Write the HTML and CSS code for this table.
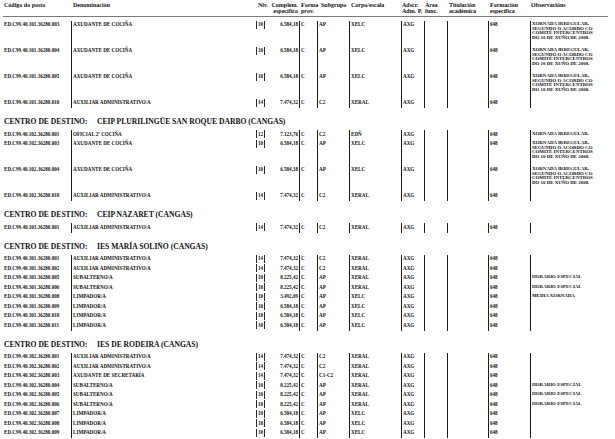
FILE: index.html
```html
<!DOCTYPE html>
<html lang="gl">
<head>
<meta charset="utf-8">
<title>Relación de postos</title>
<link rel="stylesheet" href="styles.css">
</head>
<body>
<div class="page">
  <div class="grid head">
    <div class="hc"><div></div><div>Código do posto</div></div>
    <div class="hc pl"><div></div><div>Denominación</div></div>
    <div class="hc niv-h"><div></div><div>Niv.</div></div>
    <div class="hc comp-h"><div>Complem.</div><div>específico</div></div>
    <div class="hc pl"><div>Forma</div><div>prov.</div></div>
    <div class="hc sub-h"><div></div><div>Subgrupo</div></div>
    <div class="hc pl"><div></div><div>Corpo/escala</div></div>
    <div class="hc"><div>Adscr.</div><div>Adm. P.</div></div>
    <div class="hc"><div>Área</div><div>func.</div></div>
    <div class="hc pl"><div>Titulación</div><div>académica</div></div>
    <div class="hc pl"><div>Formación</div><div>específica</div></div>
    <div class="hc"><div></div><div>Observacións</div></div>
  </div>

  <div class="grid row m"><div class="c">ED.C99.40.101.36280.003</div><div class="c bl">AXUDANTE DE COCIÑA</div><div class="c niv"><span>10</span></div><div class="c comp">6.584,18</div><div class="c bl">C</div><div class="c bl">AP</div><div class="c bl">XELC</div><div class="c bl">AXG</div><div class="c bl"></div><div class="c bl"></div><div class="c bl">648</div><div class="c bl obs">XORNADA IRREGULAR,<br>SEGUNDO O ACORDO CO<br>COMITÉ INTERCENTROS<br>DO 10 DE XUÑO DE 2008.</div></div>
  <div class="grid row m"><div class="c">ED.C99.40.101.36280.004</div><div class="c bl">AXUDANTE DE COCIÑA</div><div class="c niv"><span>10</span></div><div class="c comp">6.584,18</div><div class="c bl">C</div><div class="c bl">AP</div><div class="c bl">XELC</div><div class="c bl">AXG</div><div class="c bl"></div><div class="c bl"></div><div class="c bl">648</div><div class="c bl obs">XORNADA IRREGULAR,<br>SEGUNDO O ACORDO CO<br>COMITÉ INTERCENTROS<br>DO 10 DE XUÑO DE 2008.</div></div>
  <div class="grid row m"><div class="c">ED.C99.40.101.36280.005</div><div class="c bl">AXUDANTE DE COCIÑA</div><div class="c niv"><span>10</span></div><div class="c comp">6.584,18</div><div class="c bl">C</div><div class="c bl">AP</div><div class="c bl">XELC</div><div class="c bl">AXG</div><div class="c bl"></div><div class="c bl"></div><div class="c bl">648</div><div class="c bl obs">XORNADA IRREGULAR,<br>SEGUNDO O ACORDO CO<br>COMITÉ INTERCENTROS<br>DO 10 DE XUÑO DE 2008.</div></div>
  <div class="grid row s"><div class="c">ED.C99.40.101.36280.010</div><div class="c bl">AUXILIAR ADMINISTRATIVO/A</div><div class="c niv"><span>14</span></div><div class="c comp">7.474,32</div><div class="c bl">C</div><div class="c bl">C2</div><div class="c bl">XERAL</div><div class="c bl">AXG</div><div class="c bl"></div><div class="c bl"></div><div class="c bl">648</div><div class="c bl obs"></div></div>

  <div class="dest"><span class="lab">CENTRO DE DESTINO:</span>CEIP PLURILINGÜE SAN ROQUE DARBO (CANGAS)</div>
  <div class="grid row s"><div class="c">ED.C99.40.102.36280.001</div><div class="c bl">OFICIAL 2ª COCIÑA</div><div class="c niv"><span>12</span></div><div class="c comp">7.123,76</div><div class="c bl">C</div><div class="c bl">C2</div><div class="c bl">EDÑ</div><div class="c bl">AXG</div><div class="c bl"></div><div class="c bl"></div><div class="c bl">648</div><div class="c bl obs">XORNADA IRREGULAR.</div></div>
  <div class="grid row m"><div class="c">ED.C99.40.102.36280.003</div><div class="c bl">AXUDANTE DE COCIÑA</div><div class="c niv"><span>10</span></div><div class="c comp">6.584,18</div><div class="c bl">C</div><div class="c bl">AP</div><div class="c bl">XELC</div><div class="c bl">AXG</div><div class="c bl"></div><div class="c bl"></div><div class="c bl">648</div><div class="c bl obs">XORNADA IRREGULAR,<br>SEGUNDO O ACORDO CO<br>COMITÉ INTERCENTROS<br>DO 10 DE XUÑO DE 2008.</div></div>
  <div class="grid row m"><div class="c">ED.C99.40.102.36280.004</div><div class="c bl">AXUDANTE DE COCIÑA</div><div class="c niv"><span>10</span></div><div class="c comp">6.584,18</div><div class="c bl">C</div><div class="c bl">AP</div><div class="c bl">XELC</div><div class="c bl">AXG</div><div class="c bl"></div><div class="c bl"></div><div class="c bl">648</div><div class="c bl obs">XORNADA IRREGULAR,<br>SEGUNDO O ACORDO CO<br>COMITÉ INTERCENTROS<br>DO 10 DE XUÑO DE 2008.</div></div>
  <div class="grid row s"><div class="c">ED.C99.40.102.36280.010</div><div class="c bl">AUXILIAR ADMINISTRATIVO/A</div><div class="c niv"><span>14</span></div><div class="c comp">7.474,32</div><div class="c bl">C</div><div class="c bl">C2</div><div class="c bl">XERAL</div><div class="c bl">AXG</div><div class="c bl"></div><div class="c bl"></div><div class="c bl">648</div><div class="c bl obs"></div></div>

  <div class="dest"><span class="lab">CENTRO DE DESTINO:</span>CEIP NAZARET (CANGAS)</div>
  <div class="grid row s"><div class="c">ED.C99.40.103.36280.001</div><div class="c bl">AUXILIAR ADMINISTRATIVO/A</div><div class="c niv"><span>14</span></div><div class="c comp">7.474,32</div><div class="c bl">C</div><div class="c bl">C2</div><div class="c bl">XERAL</div><div class="c bl">AXG</div><div class="c bl"></div><div class="c bl"></div><div class="c bl">648</div><div class="c bl obs"></div></div>

  <div class="dest"><span class="lab">CENTRO DE DESTINO:</span>IES MARÍA SOLIÑO (CANGAS)</div>
  <div class="grid row s"><div class="c">ED.C99.40.301.36280.001</div><div class="c bl">AUXILIAR ADMINISTRATIVO/A</div><div class="c niv"><span>14</span></div><div class="c comp">7.474,32</div><div class="c bl">C</div><div class="c bl">C2</div><div class="c bl">XERAL</div><div class="c bl">AXG</div><div class="c bl"></div><div class="c bl"></div><div class="c bl">648</div><div class="c bl obs"></div></div>
  <div class="grid row s"><div class="c">ED.C99.40.301.36280.002</div><div class="c bl">AUXILIAR ADMINISTRATIVO/A</div><div class="c niv"><span>14</span></div><div class="c comp">7.474,32</div><div class="c bl">C</div><div class="c bl">C2</div><div class="c bl">XERAL</div><div class="c bl">AXG</div><div class="c bl"></div><div class="c bl"></div><div class="c bl">648</div><div class="c bl obs"></div></div>
  <div class="grid row s"><div class="c">ED.C99.40.301.36280.005</div><div class="c bl">SUBALTERNO/A</div><div class="c niv"><span>10</span></div><div class="c comp">8.225,42</div><div class="c bl">C</div><div class="c bl">AP</div><div class="c bl">XERAL</div><div class="c bl">AXG</div><div class="c bl"></div><div class="c bl"></div><div class="c bl">648</div><div class="c bl obs">HORARIO ESPECIAL</div></div>
  <div class="grid row s"><div class="c">ED.C99.40.301.36280.006</div><div class="c bl">SUBALTERNO/A</div><div class="c niv"><span>10</span></div><div class="c comp">8.225,42</div><div class="c bl">C</div><div class="c bl">AP</div><div class="c bl">XERAL</div><div class="c bl">AXG</div><div class="c bl"></div><div class="c bl"></div><div class="c bl">648</div><div class="c bl obs">HORARIO ESPECIAL</div></div>
  <div class="grid row s"><div class="c">ED.C99.40.301.36280.008</div><div class="c bl">LIMPADOR/A</div><div class="c niv"><span>10</span></div><div class="c comp">3.492,09</div><div class="c bl">C</div><div class="c bl">AP</div><div class="c bl">XELC</div><div class="c bl">AXG</div><div class="c bl"></div><div class="c bl"></div><div class="c bl">648</div><div class="c bl obs">MEDIA XORNADA</div></div>
  <div class="grid row s"><div class="c">ED.C99.40.301.36280.009</div><div class="c bl">LIMPADOR/A</div><div class="c niv"><span>10</span></div><div class="c comp">6.584,18</div><div class="c bl">C</div><div class="c bl">AP</div><div class="c bl">XELC</div><div class="c bl">AXG</div><div class="c bl"></div><div class="c bl"></div><div class="c bl">648</div><div class="c bl obs"></div></div>
  <div class="grid row s"><div class="c">ED.C99.40.301.36280.010</div><div class="c bl">LIMPADOR/A</div><div class="c niv"><span>10</span></div><div class="c comp">6.584,18</div><div class="c bl">C</div><div class="c bl">AP</div><div class="c bl">XELC</div><div class="c bl">AXG</div><div class="c bl"></div><div class="c bl"></div><div class="c bl">648</div><div class="c bl obs"></div></div>
  <div class="grid row s"><div class="c">ED.C99.40.301.36280.011</div><div class="c bl">LIMPADOR/A</div><div class="c niv"><span>10</span></div><div class="c comp">6.584,18</div><div class="c bl">C</div><div class="c bl">AP</div><div class="c bl">XELC</div><div class="c bl">AXG</div><div class="c bl"></div><div class="c bl"></div><div class="c bl">648</div><div class="c bl obs"></div></div>

  <div class="dest"><span class="lab">CENTRO DE DESTINO:</span>IES DE RODEIRA (CANGAS)</div>
  <div class="grid row s"><div class="c">ED.C99.40.302.36280.001</div><div class="c bl">AUXILIAR ADMINISTRATIVO/A</div><div class="c niv"><span>14</span></div><div class="c comp">7.474,32</div><div class="c bl">C</div><div class="c bl">C2</div><div class="c bl">XERAL</div><div class="c bl">AXG</div><div class="c bl"></div><div class="c bl"></div><div class="c bl">648</div><div class="c bl obs"></div></div>
  <div class="grid row s"><div class="c">ED.C99.40.302.36280.002</div><div class="c bl">AUXILIAR ADMINISTRATIVO/A</div><div class="c niv"><span>14</span></div><div class="c comp">7.474,32</div><div class="c bl">C</div><div class="c bl">C2</div><div class="c bl">XERAL</div><div class="c bl">AXG</div><div class="c bl"></div><div class="c bl"></div><div class="c bl">648</div><div class="c bl obs"></div></div>
  <div class="grid row s"><div class="c">ED.C99.40.302.36280.003</div><div class="c bl">AXUDANTE DE SECRETARÍA</div><div class="c niv"><span>14</span></div><div class="c comp">7.474,32</div><div class="c bl">C</div><div class="c bl">C1-C2</div><div class="c bl">XERAL</div><div class="c bl">AXG</div><div class="c bl"></div><div class="c bl"></div><div class="c bl">648</div><div class="c bl obs"></div></div>
  <div class="grid row s"><div class="c">ED.C99.40.302.36280.004</div><div class="c bl">SUBALTERNO/A</div><div class="c niv"><span>10</span></div><div class="c comp">8.225,42</div><div class="c bl">C</div><div class="c bl">AP</div><div class="c bl">XERAL</div><div class="c bl">AXG</div><div class="c bl"></div><div class="c bl"></div><div class="c bl">648</div><div class="c bl obs">HORARIO ESPECIAL</div></div>
  <div class="grid row s"><div class="c">ED.C99.40.302.36280.005</div><div class="c bl">SUBALTERNO/A</div><div class="c niv"><span>10</span></div><div class="c comp">8.225,42</div><div class="c bl">C</div><div class="c bl">AP</div><div class="c bl">XERAL</div><div class="c bl">AXG</div><div class="c bl"></div><div class="c bl"></div><div class="c bl">648</div><div class="c bl obs">HORARIO ESPECIAL</div></div>
  <div class="grid row s"><div class="c">ED.C99.40.302.36280.006</div><div class="c bl">SUBALTERNO/A</div><div class="c niv"><span>10</span></div><div class="c comp">8.225,42</div><div class="c bl">C</div><div class="c bl">AP</div><div class="c bl">XERAL</div><div class="c bl">AXG</div><div class="c bl"></div><div class="c bl"></div><div class="c bl">648</div><div class="c bl obs">HORARIO ESPECIAL</div></div>
  <div class="grid row s"><div class="c">ED.C99.40.302.36280.007</div><div class="c bl">LIMPADOR/A</div><div class="c niv"><span>10</span></div><div class="c comp">6.584,18</div><div class="c bl">C</div><div class="c bl">AP</div><div class="c bl">XELC</div><div class="c bl">AXG</div><div class="c bl"></div><div class="c bl"></div><div class="c bl">648</div><div class="c bl obs"></div></div>
  <div class="grid row s"><div class="c">ED.C99.40.302.36280.008</div><div class="c bl">LIMPADOR/A</div><div class="c niv"><span>10</span></div><div class="c comp">6.584,18</div><div class="c bl">C</div><div class="c bl">AP</div><div class="c bl">XELC</div><div class="c bl">AXG</div><div class="c bl"></div><div class="c bl"></div><div class="c bl">648</div><div class="c bl obs"></div></div>
  <div class="grid row s"><div class="c">ED.C99.40.302.36280.009</div><div class="c bl">LIMPADOR/A</div><div class="c niv"><span>10</span></div><div class="c comp">6.584,18</div><div class="c bl">C</div><div class="c bl">AP</div><div class="c bl">XELC</div><div class="c bl">AXG</div><div class="c bl"></div><div class="c bl"></div><div class="c bl">648</div><div class="c bl obs"></div></div>
</div>
</body>
</html>
```

FILE: styles.css
```css
html, body {
  margin: 0;
  padding: 0;
  background: #ffffff;
}
body {
  font-family: "Liberation Serif", "Times New Roman", serif;
  font-weight: bold;
  color: #111111;
}
.page {
  padding-left: 3px;
}
.grid {
  display: grid;
  grid-template-columns: 68px 185px 9px 34px 18px 32px 52px 23px 23px 41px 42px 80px;
}
.head {
  width: 605px;
  height: 16.5px;
  box-sizing: border-box;
  padding-top: 1.5px;
  border-bottom: 1.5px solid #7a7a7a;
  margin-bottom: 4px;
  font-size: 6px;
  line-height: 6.5px;
}
.hc {
  white-space: nowrap;
  padding-left: 1px;
}
.hc.pl {
  padding-left: 2px;
}
.niv-h {
  padding-left: 2px;
}
.comp-h {
  text-align: right;
  padding-right: 1px;
}
.sub-h {
  padding-left: 4px;
}
.row {
  font-size: 5.1px;
  line-height: 5px;
}
.row.s {
  height: 9.5px;
}
.row.m {
  height: 26px;
}
.c {
  box-sizing: border-box;
  padding: 1.5px 0 0 1px;
  white-space: nowrap;
}
.bl {
  border-left: 1px solid #1a1a1a;
}
.niv {
  padding: 0;
  text-align: center;
}
.niv span {
  display: block;
  height: 8px;
  padding-top: 1.5px;
  box-sizing: border-box;
  border-left: 1px solid #2a2a2a;
  border-right: 1px solid #2a2a2a;
}
.comp {
  text-align: right;
  padding-right: 1px;
}
.obs {
  font-size: 4.9px;
  line-height: 4.7px;
}
.dest {
  height: 22px;
  box-sizing: border-box;
  padding: 10px 0 0 1px;
  font-size: 7.6px;
  line-height: 8px;
  white-space: nowrap;
}
.lab {
  display: inline-block;
  width: 93px;
}
```
